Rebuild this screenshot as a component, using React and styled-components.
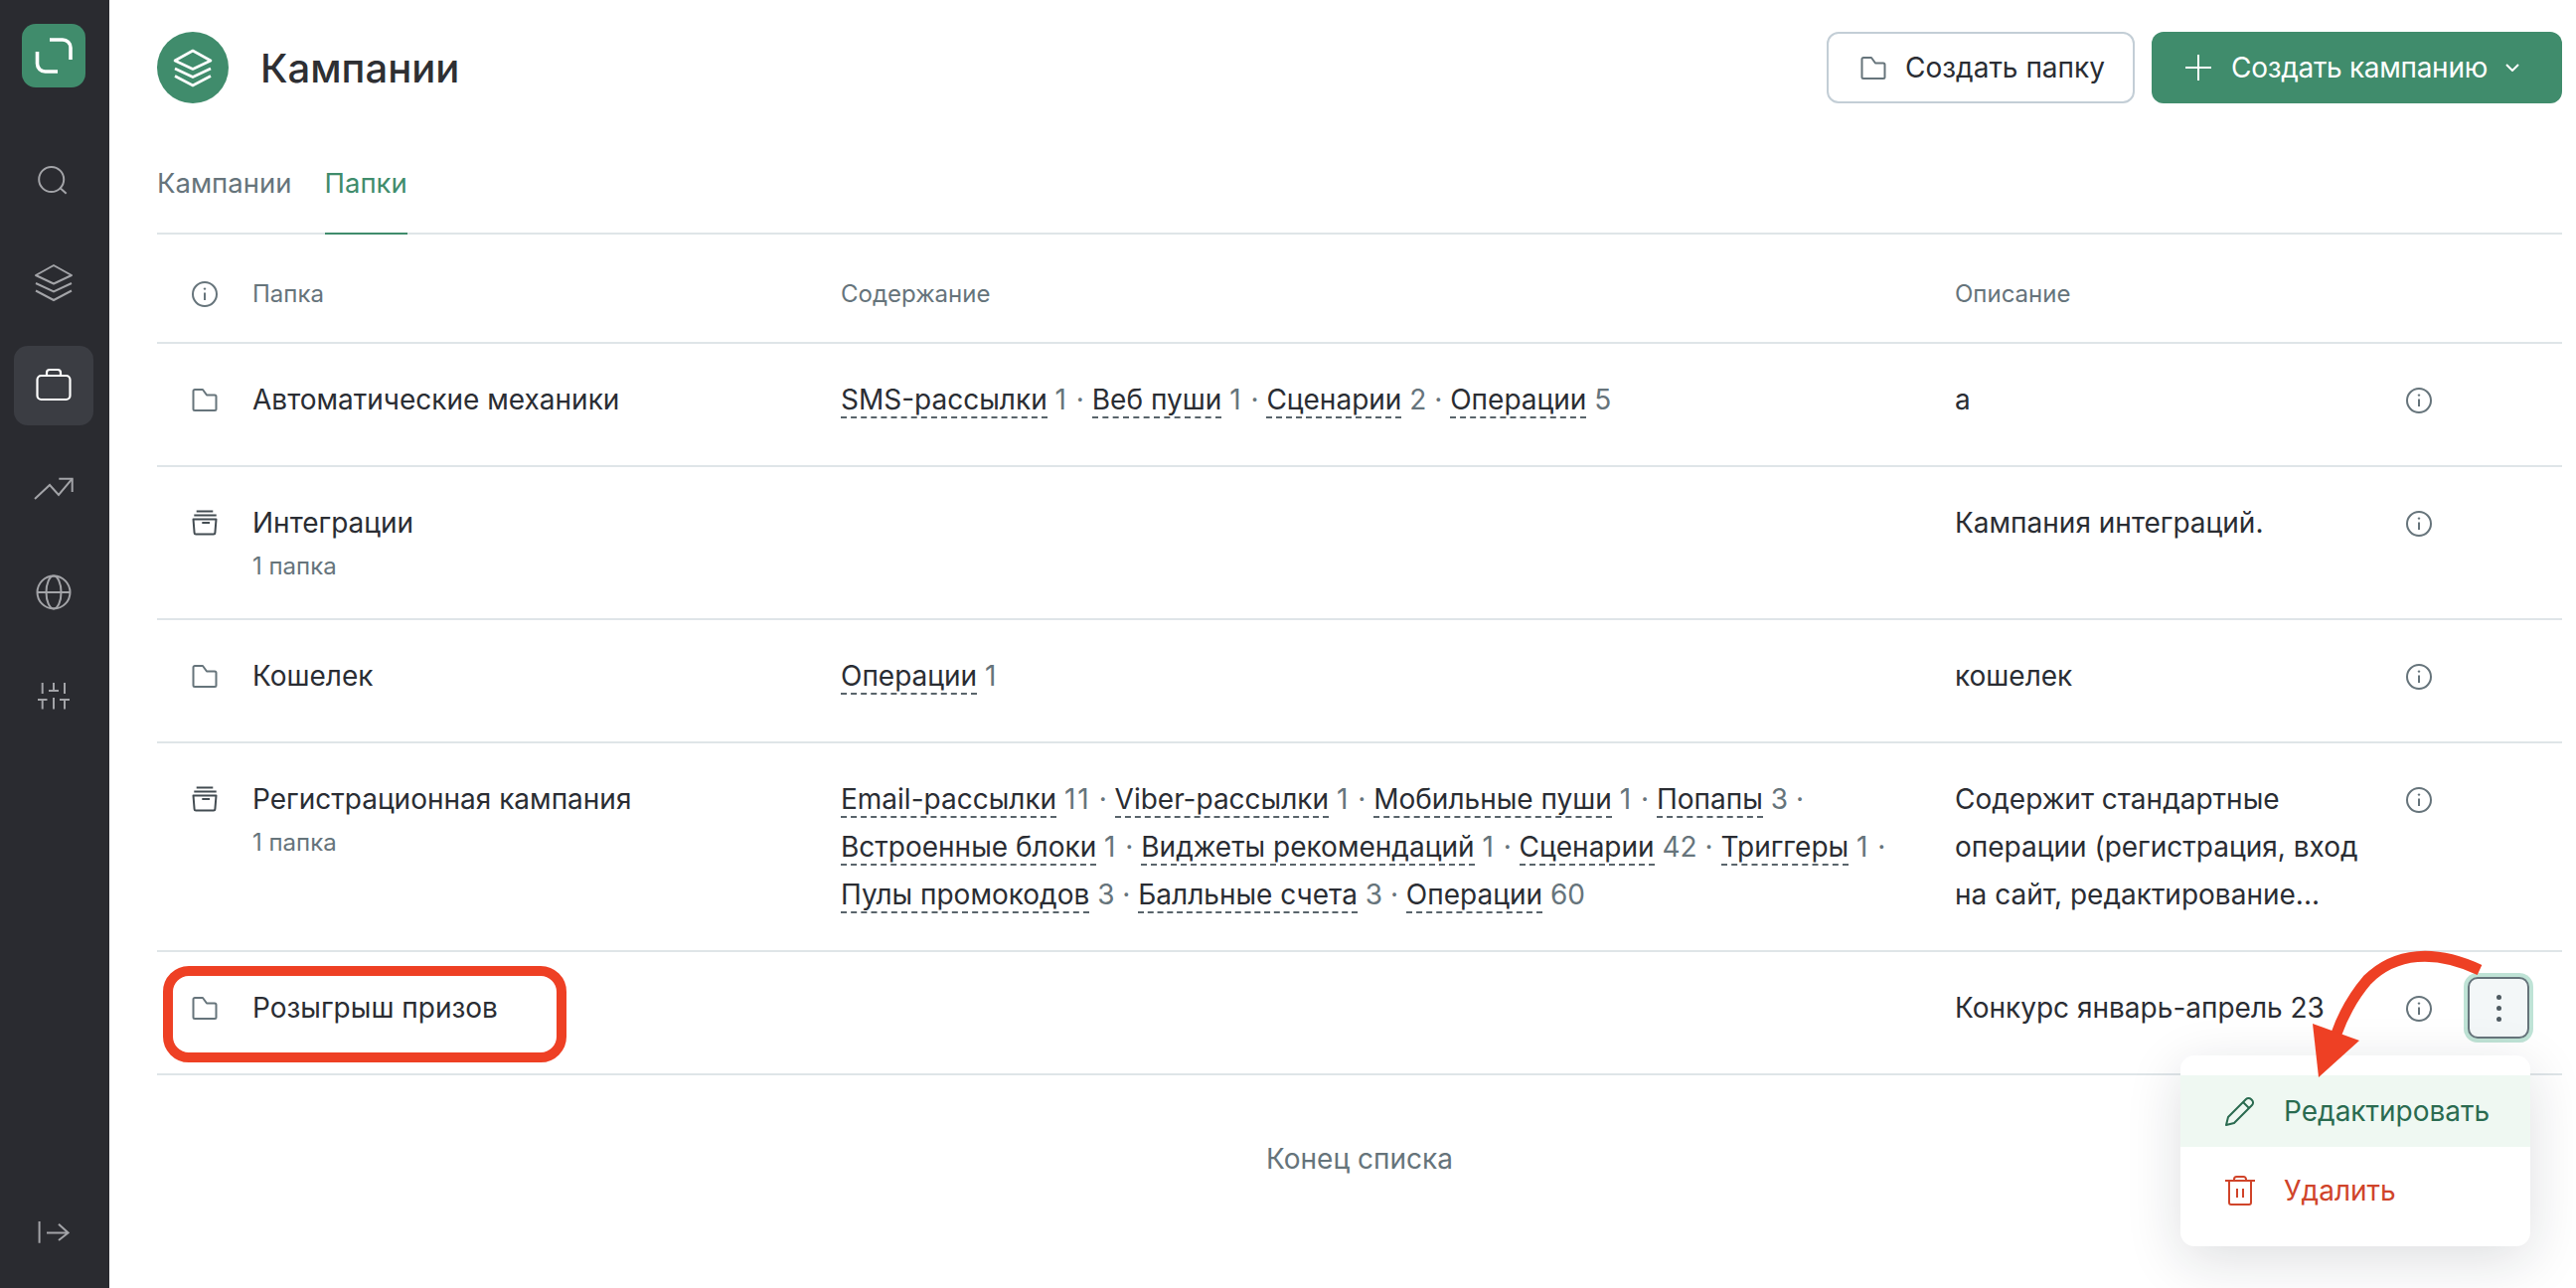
import React from "react";
import styled, { createGlobalStyle } from "styled-components";

const Global = createGlobalStyle`
  html, body { margin: 0; padding: 0; background: #fff; }
  body { font-family: Inter, "Noto Sans", sans-serif; color: #2a2d33; overflow: hidden; }
  * { box-sizing: border-box; }
`;

const Page = styled.div`display: flex; height: 1296px; width: 2592px; position: relative;`;
const Sidebar = styled.aside`
  width: 110px; flex: none; background: #2a2b30; display: flex; flex-direction: column;
  align-items: center; padding: 24px 2px 15px 0;
`;
const LogoTile = styled.div`width: 64px; height: 64px; border-radius: 14px; background: #408c6c; margin-bottom: 52px;
  svg { display: block; }`;
const NavList = styled.nav`display: flex; flex-direction: column; gap: 24px; flex: 1;`;
const NavItem = styled.div`
  width: 80px; height: 80px; border-radius: 14px; display: flex; align-items: center; justify-content: center;
  background: ${p => (p.$active ? "#3b3d43" : "transparent")};
  color: ${p => (p.$active ? "#ffffff" : "#a3a4a8")};
`;
const Main = styled.main`flex: 1; min-width: 0; padding: 32px 14px 0 48px; display: flex; flex-direction: column;`;
const Header = styled.header`display: flex; align-items: center; height: 72px;`;
const TitleBadge = styled.div`width: 72px; height: 72px; border-radius: 50%; background: #408c6c; color: #fff;
  display: flex; align-items: center; justify-content: center; margin-right: 32px;`;
const Title = styled.h1`margin: 0; font-size: 40px; font-weight: 500; color: #2e2f33; flex: 1; letter-spacing: 0;`;
const Button = styled.button`
  height: 72px; border-radius: 12px; font: 400 28px/1 Inter, sans-serif; display: flex; align-items: center;
  cursor: pointer; margin-left: ${p => (p.$primary ? "17px" : "0")};
  background: ${p => (p.$primary ? "#408c6c" : "#fff")};
  color: ${p => (p.$primary ? "#fff" : "#2a2d33")};
  border: ${p => (p.$primary ? "none" : "2px solid #c3ced6")};
  width: ${p => (p.$primary ? "413px" : "310px")};
  padding: ${p => (p.$primary ? "0 0 0 34px" : "0 0 0 32px")};
  gap: ${p => (p.$primary ? "20px" : "19px")};
  letter-spacing: ${p => (p.$primary ? "-0.3px" : "0")};
`;
const Chevron = styled.svg`margin-left: -2px;`;
const Tabs = styled.div`display: flex; gap: 33px; margin-top: 56px; border-bottom: 2px solid #dfe5e8; height: 76px;`;
const Tab = styled.div`
  font-size: 27.5px; line-height: 48px; height: 76px; color: ${p => (p.$active ? "#408c6c" : "#66747b")};
  border-bottom: 2px solid ${p => (p.$active ? "#408c6c" : "transparent")};
`;
const RowBase = styled.div`
  display: grid; grid-template-columns: 96px 592px 1121px 454px 26px 1fr; border-bottom: 2px solid #dfe5e8; position: relative;
`;
const HeadRow = styled(RowBase)`
  padding: 39px 0 27px; font-size: 24px; line-height: 42px; color: #66747b; align-items: center; height: 110px;
`;
const HeadIcon = styled.div`padding-left: 35px; display: flex; align-items: center;`;
const Row = styled(RowBase)`min-height: 124px; padding: 32px 0; font-size: 28px; line-height: 48px;`;
const IconCell = styled.div`padding-left: 35px; height: 48px; display: flex; align-items: center;`;
const NameCell = styled.div``;
const Sub = styled.div`font-size: 24px; line-height: 40px; color: #66747b;`;
const ContentCell = styled.div`padding-right: 60px;`;
const Item = styled.span`white-space: nowrap;`;
const ItemName = styled.span`border-bottom: 2px dashed #59646b;`;
const Muted = styled.span`color: #66747b;`;
const Count = styled.span`letter-spacing: ${p => (p.$wide ? "2px" : "0")};`;
const DescCell = styled.div`padding-right: 30px;`;
const InfoCell = styled.div`height: 48px; padding-top: 2px; display: flex; align-items: center; color: #66747b;`;
const ActionCell = styled.div`padding-left: 36px; position: relative;`;
const Kebab = styled.div`
  width: 62px; height: 62px; margin-top: -7px; border-radius: 10px; background: #f3f7f8; border: 2px solid #66747b;
  box-shadow: 0 0 0 4px #bfe3d6; display: flex; flex-direction: column; align-items: center; justify-content: center; gap: 6px;
`;
const Dot = styled.i`width: 5px; height: 5px; border-radius: 50%; background: #4e5a61; display: block;`;
const Menu = styled.div`
  position: absolute; top: 72px; right: 32px; width: 352px; background: #fff; border-radius: 14px; padding: 20px 0;
  display: flex; flex-direction: column; gap: 8px; box-shadow: 0 14px 56px rgba(20, 30, 40, .14); z-index: 2;
`;
const MenuItem = styled.div`
  height: 72px; display: flex; align-items: center; gap: 29px; padding-left: 45px; font-size: 28px;
  background: ${p => (p.$active ? "#eff8f2" : "transparent")};
  color: ${p => (p.$danger ? "#d0442a" : "#2a6b50")};
`;
const Highlight = styled.div`
  position: absolute; left: 6px; top: 14px; width: 406px; height: 97px; border: 10px solid #ee4024; border-radius: 26px; pointer-events: none;
`;
const ArrowMark = styled.svg`position: absolute; left: 2320px; top: 950px; z-index: 3;`;
const EndNote = styled.div`text-align: center; padding-top: 60px; font-size: 28px; line-height: 48px; color: #66747b;`;

const Layers = ({ w = 2 }) => (
  <svg width="40" height="40" viewBox="0 0 40 40" fill="none" stroke="currentColor" strokeWidth={w}>
    <path d="M20 3 38 13 20 21.5 2 13Z" strokeLinejoin="round" />
    <path d="M2 21 20 29.5 38 21" />
    <path d="M2 28.5 20 38 38 28.5" />
  </svg>
);
const Search = () => (
  <svg width="40" height="40" viewBox="0 0 40 40" fill="none" stroke="currentColor" strokeWidth="2">
    <circle cx="17.7" cy="20.5" r="12.5" /><path d="M26 28.7 32.7 34.7" />
  </svg>
);
const Case = () => (
  <svg width="40" height="40" viewBox="0 0 40 40" fill="none" stroke="currentColor" strokeWidth="2.2">
    <rect x="3.5" y="10" width="33" height="24" rx="4" />
    <path d="M13 10V7a3 3 0 0 1 3-3h8a3 3 0 0 1 3 3v3" />
  </svg>
);
const Trend = () => (
  <svg width="40" height="40" viewBox="0 0 40 40" fill="none" stroke="currentColor" strokeWidth="2">
    <path d="M1 30 16 16 25 26 38.7 9.7" /><path d="M25.3 9.7H38.7V23" />
  </svg>
);
const Globe = () => (
  <svg width="40" height="40" viewBox="0 0 40 40" fill="none" stroke="currentColor" strokeWidth="2">
    <circle cx="20" cy="20" r="16.5" /><ellipse cx="20" cy="20" rx="7.5" ry="16.5" /><path d="M3.5 20H36.5" />
  </svg>
);
const Sliders = () => (
  <svg width="40" height="40" viewBox="0 0 40 40" fill="none" stroke="currentColor" strokeWidth="2">
    <path d="M8.7 7V18M4 24H13.5M8.7 24V33.5M20 7V15M15 15H25M20 22V33.5M31 7V18M26 24H36M31 24V33.5" />
  </svg>
);
const Exit = () => (
  <svg width="40" height="40" viewBox="0 0 40 40" fill="none" stroke="currentColor" strokeWidth="2">
    <path d="M5.6 8V29.7M13 19.5H34.6M25 10.7 34.6 19.5 25 27" />
  </svg>
);
const Folder = ({ s = 26, c = "#66747b" }) => (
  <svg width={s} height={s} viewBox="0 0 26 26" fill="none" stroke={c} strokeWidth="2" strokeLinejoin="round">
    <path d="M1.5 4.5A1.5 1.5 0 0 1 3 3H11L15 8.5H23A1.5 1.5 0 0 1 24.5 10V22.5A1.5 1.5 0 0 1 23 24H3A1.5 1.5 0 0 1 1.5 22.5Z" />
  </svg>
);
const Stack = () => (
  <svg width="26" height="26" viewBox="0 0 26 26" fill="none" stroke="#434c52" strokeWidth="2" strokeLinejoin="round">
    <path d="M4.7 1.5H21.3M2.3 5.5H24.7M10.3 13H18" />
    <path d="M1.5 9.5H24.5L23.4 23.2A1.5 1.5 0 0 1 21.9 24.6H4.1A1.5 1.5 0 0 1 2.6 23.2Z" />
  </svg>
);
const Info = () => (
  <svg width="26" height="26" viewBox="0 0 26 26" fill="none" stroke="#66747b" strokeWidth="2">
    <circle cx="13" cy="13" r="12" /><path d="M13 11.5V19" /><circle cx="13" cy="7.6" r="1.2" fill="#66747b" stroke="none" />
  </svg>
);
const Pencil = () => (
  <svg width="30" height="30" viewBox="0 0 30 30" fill="none" stroke="#2a6b50" strokeWidth="2" strokeLinejoin="round">
    <path d="M1 29 3 21 21 3A3.5 3.5 0 0 1 26 3L27 4A3.5 3.5 0 0 1 27 9L9 27Z" /><path d="M18 6 24 12" />
  </svg>
);
const Trash = () => (
  <svg width="30" height="30" viewBox="0 0 30 30" fill="none" stroke="#d0442a" strokeWidth="2">
    <path d="M0 5H30M9 5V3.5A2.5 2.5 0 0 1 11.5 1H18.5A2.5 2.5 0 0 1 21 3.5V5M4 5V27A2 2 0 0 0 6 29H24A2 2 0 0 0 26 27V5M12 13V22M18 13V22" />
  </svg>
);

const Entries = ({ list }) => list.map(([n, c], i) => (
  <React.Fragment key={n + i}>
    <Item>
      <ItemName>{n}</ItemName>{" "}
      <Muted><Count $wide={String(c).includes("1")}>{c}</Count>{i < list.length - 1 ? " ·" : ""}</Muted>
    </Item>{" "}
  </React.Fragment>
));

const rows = [
  { icon: "f", name: "Автоматические механики", items: [["SMS-рассылки", 1], ["Веб пуши", 1], ["Сценарии", 2], ["Операции", 5]], desc: "а" },
  { icon: "s", name: "Интеграции", sub: "1 папка", items: [], desc: "Кампания интеграций." },
  { icon: "f", name: "Кошелек", items: [["Операции", 1]], desc: "кошелек" },
  { icon: "s", name: "Регистрационная кампания", sub: "1 папка", items: [["Email-рассылки", 11], ["Viber-рассылки", 1], ["Мобильные пуши", 1], ["Попапы", 3], ["Встроенные блоки", 1], ["Виджеты рекомендаций", 1], ["Сценарии", 42], ["Триггеры", 1], ["Пулы промокодов", 3], ["Балльные счета", 3], ["Операции", 60]], desc: "Содержит стандартные операции (регистрация, вход на сайт, редактирование..." },
  { icon: "f", name: "Розыгрыш призов", items: [], desc: "Конкурс январь-апрель 23", last: true },
];

export default function App() {
  return (
    <Page>
      <Global />
      <Sidebar>
        <LogoTile>
          <svg width="64" height="64" viewBox="0 0 64 64" fill="none" stroke="#fff" strokeWidth="3.6">
            <path d="M28 16H41a8 8 0 0 1 8 8V36" /><path d="M15.5 28V40a8 8 0 0 0 8 8H36" />
          </svg>
        </LogoTile>
        <NavList>
          <NavItem><Search /></NavItem>
          <NavItem><Layers /></NavItem>
          <NavItem $active><Case /></NavItem>
          <NavItem><Trend /></NavItem>
          <NavItem><Globe /></NavItem>
          <NavItem><Sliders /></NavItem>
        </NavList>
        <NavItem><Exit /></NavItem>
      </Sidebar>
      <Main>
        <Header>
          <TitleBadge><Layers w={2.6} /></TitleBadge>
          <Title>Кампании</Title>
          <Button><Folder c="#66747b" /><span>Создать папку</span></Button>
          <Button $primary>
            <svg width="26" height="26" viewBox="0 0 26 26" stroke="#fff" strokeWidth="2"><path d="M13 0V26M0 13H26" /></svg>
            <span>Создать кампанию</span>
            <Chevron width="14" height="8" viewBox="0 0 14 8" fill="none" stroke="#fff" strokeWidth="2"><path d="M1 1 7 7 13 1" /></Chevron>
          </Button>
        </Header>
        <Tabs>
          <Tab>Кампании</Tab>
          <Tab $active>Папки</Tab>
        </Tabs>
        <HeadRow>
          <HeadIcon><Info /></HeadIcon>
          <div>Папка</div>
          <div>Содержание</div>
          <div>Описание</div>
        </HeadRow>
        {rows.map(r => (
          <Row key={r.name}>
            <IconCell>{r.icon === "f" ? <Folder /> : <Stack />}</IconCell>
            <NameCell>{r.name}{r.sub && <Sub>{r.sub}</Sub>}</NameCell>
            <ContentCell><Entries list={r.items} /></ContentCell>
            <DescCell>{r.desc}</DescCell>
            <InfoCell><Info /></InfoCell>
            <ActionCell>
              {r.last && (
                <>
                  <Kebab><Dot /><Dot /><Dot /></Kebab>
                  <Menu>
                    <MenuItem $active><Pencil />Редактировать</MenuItem>
                    <MenuItem $danger><Trash />Удалить</MenuItem>
                  </Menu>
                </>
              )}
            </ActionCell>
            {r.last && <Highlight />}
          </Row>
        ))}
        <EndNote>Конец списка</EndNote>
      </Main>
      <ArrowMark width="190" height="140" viewBox="0 0 190 140" fill="none">
        <path d="M175 26C130 5 90 8 62 36C50 50 40 65 31 90" stroke="#ee4024" strokeWidth="11" />
        <path d="M13 134 7 80 54 97Z" fill="#ee4024" />
      </ArrowMark>
    </Page>
  );
}
